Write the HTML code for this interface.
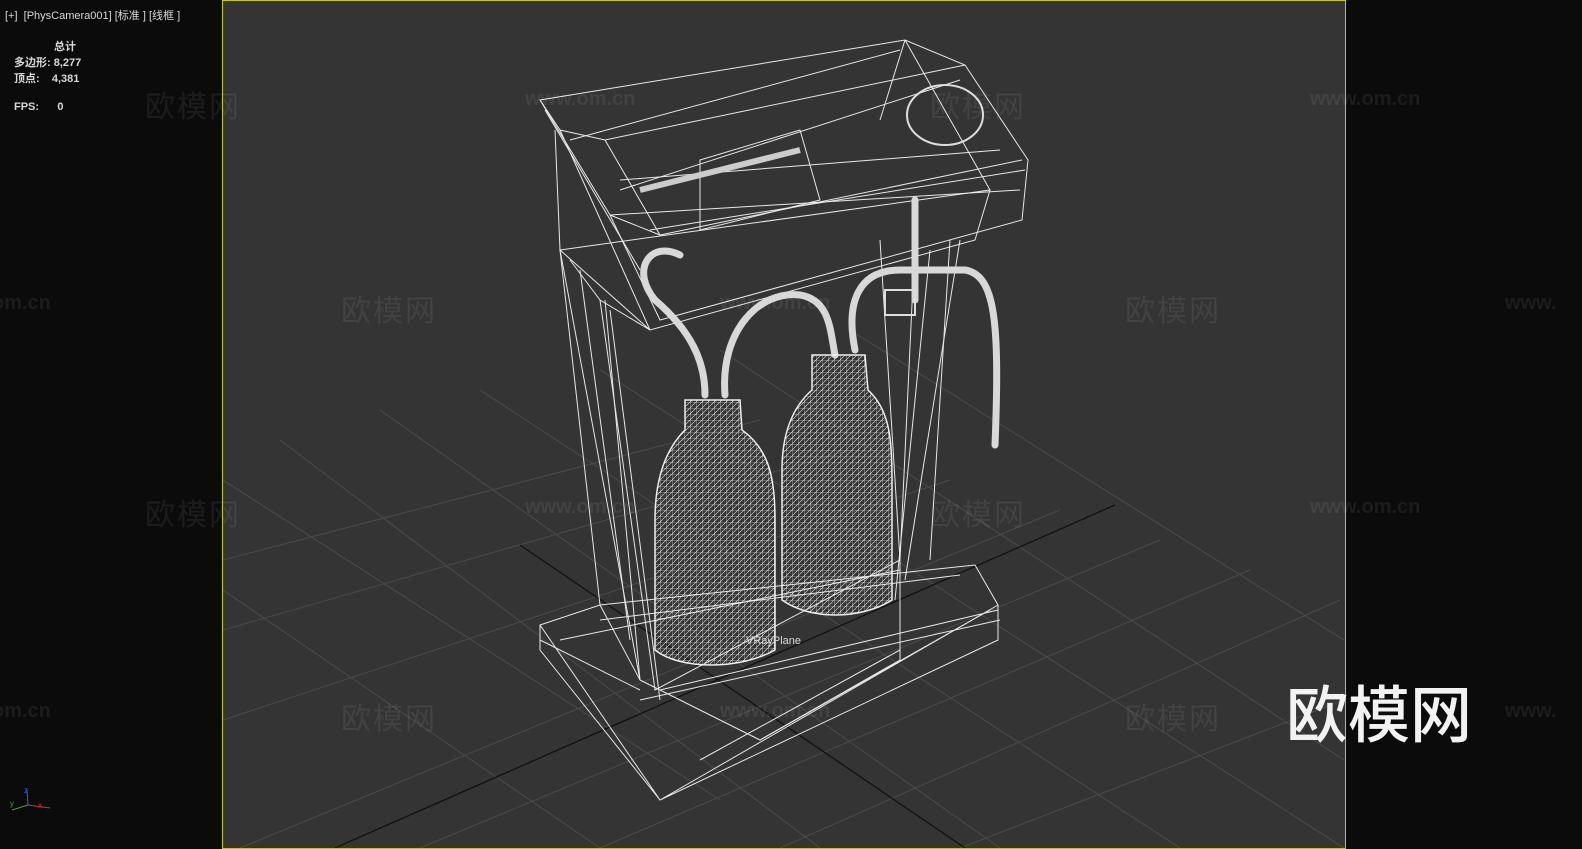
<!DOCTYPE html>
<html><head><meta charset="utf-8"><style>
body{margin:0;width:1582px;height:849px;background:#0b0b0b;overflow:hidden;position:relative;font-family:"Liberation Sans","Noto Sans CJK SC",sans-serif}
.t{position:absolute;color:#d8d8d8;font-size:11px;white-space:nowrap}
.wm{position:absolute;color:rgba(255,255,255,0.07);font-size:30px;font-family:"Noto Sans CJK SC",sans-serif;letter-spacing:2px}
.wu{position:absolute;color:rgba(255,255,255,0.07);font-size:20px;font-weight:bold}
</style></head><body>
<div style="position:absolute;left:222px;top:0;width:1122px;height:847px;background:#343434;border:1px solid #c8c800"></div>
<svg style="position:absolute;left:0;top:0" width="1582" height="849">
<defs><clipPath id="c"><rect x="223" y="1" width="1121" height="847"/></clipPath>
<pattern id="m" width="6" height="6" patternUnits="userSpaceOnUse"><path d="M0 0L6 0M0 0L0 6M0 6L6 0" stroke="#eee" stroke-width="0.6"/></pattern></defs>
<g clip-path="url(#c)" stroke="#4a4a4a" stroke-width="1" fill="none">
<path d="M223 560L760 420M223 630L850 450M223 720L950 480M240 848L1060 510M420 848L1160 540M600 848L1250 570M780 848L1340 600M960 848L1344 700"/>
<path d="M223 480L720 800M280 440L820 848M380 410L1000 848M480 390L1180 848M600 370L1344 848M720 350L1344 760M850 330L1344 640M223 590L600 848"/>
<path d="M335 848L1115 505M520 545L965 848" stroke="#111" stroke-width="1.3"/>
</g>
<g stroke="#e8e8e8" stroke-width="1" fill="none">
<path d="M540 100L905 40L965 65L1028 160L1022 220L660 320L610 215L540 100Z"/>
<path d="M540 100L560 130L605 140L965 65M605 140L660 235L1022 160M660 235L610 215M905 40L880 120"/>
<path d="M560 250L990 190L975 240L650 330L560 250ZM570 260L600 300L650 330"/>
<path d="M555 130L560 250L600 605M605 300L640 680M950 240L930 560M880 240L900 560"/>
<path d="M540 625L600 605L975 565L998 605L660 800L540 625ZM540 625L540 650L660 800M998 605L998 640L660 800M660 690L998 610"/>
<path d="M600 300L655 690L900 560L915 240M640 680L760 740L900 660L900 560M600 605L640 680M700 160L800 130L820 200L700 230Z"/>
<path d="M560 130L650 330M560 250L640 680M905 40L990 190M620 180L1000 150M610 215L1020 190"/>
<path d="M545 110L640 270M570 140L900 50M620 190L960 80M650 230L1025 170M580 270L630 640M610 310L660 700M930 250L895 600M960 240L905 580M540 640L640 690M560 640L900 570M640 700L1000 620M700 760L900 650M760 740L990 610M600 620L960 575"/>
</g>
<ellipse cx="945" cy="115" rx="38" ry="30" fill="none" stroke="#ddd" stroke-width="2"/>
<path d="M640 190L800 150" stroke="#ccc" stroke-width="6"/>
<g fill="none" stroke="#d8d8d8" stroke-width="7" stroke-linecap="round">
<path d="M680 255C650 240 630 270 655 300C690 330 705 360 705 395"/>
<path d="M725 395C720 330 760 290 800 295C830 300 830 330 835 355"/>
<path d="M855 350C845 300 860 270 900 270L965 270C995 275 1000 320 995 445"/>
<path d="M915 200L915 300"/>
</g>
<g stroke="#eee" stroke-width="1.5">
<path d="M685 400L740 400L742 430C770 450 775 480 775 520L775 650C740 670 680 670 655 650L655 520C655 480 665 450 685 430Z" fill="url(#m)"/>
<path d="M812 355L865 355L868 390C890 410 892 440 892 480L892 600C860 620 810 620 782 600L782 470C782 430 795 405 812 390Z" fill="url(#m)"/>
</g>
<rect x="885" y="290" width="30" height="25" fill="none" stroke="#ddd" stroke-width="2"/>
<path d="M28 805L50 808" stroke="#c33"/>
<path d="M28 805L27 790" stroke="#36c"/><path d="M12 810L28 805" stroke="#3a3"/>
</svg>
<div class="t" style="left:5px;top:7px">[+]&nbsp; [PhysCamera001] [标准 ] [线框 ]</div>
<div class="t" style="left:54px;top:38px;font-weight:bold">总计</div>
<div class="t" style="left:14px;top:54px;font-weight:bold">多边形: 8,277</div>
<div class="t" style="left:14px;top:70px;font-weight:bold">顶点: &nbsp;&nbsp; 4,381</div>
<div class="t" style="left:14px;top:101px;font-weight:bold">FPS: &nbsp;&nbsp;&nbsp;&nbsp; 0</div>
<div class="t" style="left:746px;top:635px;font-size:11px">VRayPlane</div>
<div class="t" style="left:38px;top:801px;font-size:8px;color:#c33">x</div>
<div class="t" style="left:10px;top:799px;font-size:8px;color:#3a3">y</div>
<div class="t" style="left:24px;top:786px;font-size:8px;color:#36c">z</div>
<div class="wm" style="left:145px;top:82px">欧模网</div>
<div class="wm" style="left:930px;top:82px">欧模网</div>
<div class="wm" style="left:341px;top:286px">欧模网</div>
<div class="wm" style="left:1125px;top:286px">欧模网</div>
<div class="wm" style="left:145px;top:490px">欧模网</div>
<div class="wm" style="left:930px;top:490px">欧模网</div>
<div class="wm" style="left:341px;top:694px">欧模网</div>
<div class="wm" style="left:1125px;top:694px">欧模网</div>
<div class="wu" style="left:525px;top:88px">www.om.cn</div>
<div class="wu" style="left:1310px;top:88px">www.om.cn</div>
<div class="wu" style="left:-8px;top:292px">om.cn</div>
<div class="wu" style="left:720px;top:292px">www.om.cn</div>
<div class="wu" style="left:1505px;top:292px">www.</div>
<div class="wu" style="left:525px;top:496px">www.om.cn</div>
<div class="wu" style="left:1310px;top:496px">www.om.cn</div>
<div class="wu" style="left:-8px;top:700px">om.cn</div>
<div class="wu" style="left:720px;top:700px">www.om.cn</div>
<div class="wu" style="left:1505px;top:700px">www.</div>
<div style="position:absolute;left:1286px;top:670px;font-size:62px;color:#f2f2f2;font-family:'Noto Sans CJK SC',sans-serif;line-height:80px;font-weight:500">欧模网</div>
</body></html>
